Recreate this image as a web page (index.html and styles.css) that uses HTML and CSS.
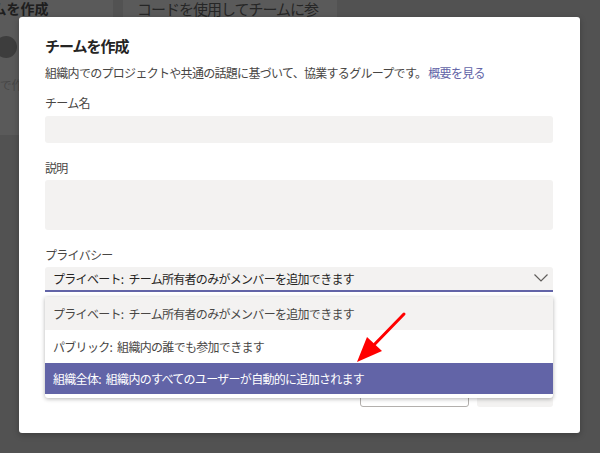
FILE: index.html
```html
<!DOCTYPE html>
<html lang="ja">
<head>
<meta charset="utf-8">
<title>チームを作成</title>
<link rel="stylesheet" href="styles.css">
</head>
<body>
<div class="bg-cards">
  <div class="card card-a">
    <div class="card-title">チームを作成</div>
    <div class="avatar"></div>
    <div class="card-text">チームで作成</div>
  </div>
  <div class="card card-b">
    <div class="card-title-b">コードを使用してチームに参</div>
  </div>
</div>

<div class="overlay">
  <div class="dialog">
    <h1 class="title">チームを作成</h1>
    <p class="desc">組織内でのプロジェクトや共通の話題に基づいて、協業するグループです。 <a class="link">概要を見る</a></p>

    <div class="label label-first">チーム名</div>
    <div class="input"></div>

    <div class="label">説明</div>
    <div class="textarea"></div>

    <div class="label">プライバシー</div>
    <div class="select-wrap">
      <div class="select">
        <span>プライベート: チーム所有者のみがメンバーを追加できます</span>
        <svg class="chevron" width="14" height="8" viewBox="0 0 14 8"><polyline points="0.5,0.5 7,7 13.5,0.5" fill="none" stroke="#605e5c" stroke-width="1.2"/></svg>
      </div>
      <div class="menu">
        <div class="item item-hover">プライベート: チーム所有者のみがメンバーを追加できます</div>
        <div class="item">パブリック: 組織内の誰でも参加できます</div>
        <div class="item item-selected">組織全体: 組織内のすべてのユーザーが自動的に追加されます</div>
      </div>
    </div>

    <div class="actions">
      <div class="btn btn-cancel">キャンセル</div>
      <div class="btn btn-create">作成</div>
    </div>
  </div>
</div>

<svg class="arrow" width="600" height="453" viewBox="0 0 600 453">
  <line x1="404" y1="314" x2="371" y2="348" stroke="#ff0000" stroke-width="3" stroke-linecap="round"/>
  <polygon points="357,362 367,337 382,351" fill="#ff0000"/>
</svg>
</body>
</html>
```

FILE: styles.css
```css
* {
  box-sizing: border-box;
  margin: 0;
  padding: 0;
}

html, body {
  width: 600px;
  height: 453px;
  overflow: hidden;
}

body {
  position: relative;
  background: #525252;
  font-family: "Noto Sans CJK JP", "Noto Sans", sans-serif;
  color: #484644;
}

/* dimmed page behind the dialog */
.bg-cards {
  display: flex;
  gap: 10px;
  margin-left: -100px;
}

.card {
  height: 135px;
  background: #5a5a5a;
  overflow: hidden;
}

.card-a {
  width: 213px;
  padding-left: 65px;
}

.card-b {
  width: 214px;
  padding-left: 14px;
}

.card-title {
  font-size: 14px;
  font-weight: 700;
  line-height: 17px;
  color: #1e1e1e;
  white-space: nowrap;
}

.card-title-b {
  font-size: 15px;
  line-height: 18px;
  letter-spacing: -1px;
  color: #262626;
  white-space: nowrap;
}

.avatar {
  width: 22px;
  height: 22px;
  margin-top: 19px;
  margin-left: 30px;
  border-radius: 50%;
  background: #3d3d3d;
}

.card-text {
  margin-top: 18px;
  font-size: 12px;
  line-height: 18px;
  letter-spacing: -0.3px;
  color: #474747;
  white-space: nowrap;
}

/* dialog */
.overlay {
  position: absolute;
  inset: 0;
  display: flex;
  align-items: flex-start;
  padding: 17px 0 0 19px;
}

.dialog {
  width: 561px;
  height: 416px;
  background: #ffffff;
  border-radius: 3px;
  padding: 18px 27px 26px 26px;
  box-shadow: 0 2px 6px rgba(0, 0, 0, 0.25);
  display: flex;
  flex-direction: column;
}

.title {
  font-size: 15px;
  font-weight: 700;
  line-height: 22px;
  letter-spacing: -1px;
  color: #252423;
}

.desc {
  margin-top: 7px;
  font-size: 12px;
  line-height: 18px;
  letter-spacing: -0.7px;
  color: #484644;
  white-space: nowrap;
}

.link {
  color: #6264a7;
}

.label {
  margin-top: 16px;
  font-size: 12px;
  line-height: 18px;
  letter-spacing: -0.7px;
  color: #484644;
}

.label-first {
  margin-top: 12px;
}

.input {
  margin-top: 4px;
  height: 27px;
  background: #f3f2f1;
  border-radius: 3px;
}

.textarea {
  margin-top: 3px;
  height: 51px;
  background: #f3f2f1;
  border-radius: 3px;
}

.select-wrap {
  position: relative;
  margin-top: 3px;
}

.select {
  height: 25px;
  background: #f3f2f1;
  border-radius: 3px 3px 0 0;
  border-bottom: 2px solid #6264a7;
  display: flex;
  align-items: center;
  justify-content: space-between;
  padding: 0 5px 0 8px;
  font-size: 12px;
  letter-spacing: -0.7px;
  word-spacing: 3px;
  color: #252423;
}

.chevron {
  display: block;
  margin-bottom: 1px;
}

.menu {
  position: absolute;
  top: 30px;
  left: 0;
  right: 0;
  z-index: 2;
  background: #ffffff;
  padding-bottom: 4px;
  box-shadow: 0 1px 4px rgba(0, 0, 0, 0.3);
  border-radius: 0 0 3px 3px;
}

.item {
  height: 33px;
  display: flex;
  align-items: center;
  padding-left: 8px;
  font-size: 12px;
  letter-spacing: -0.7px;
  word-spacing: 3px;
  color: #484644;
}

.item-hover {
  background: #f3f2f1;
}

.item-selected {
  height: 31px;
  background: #6264a7;
  color: #ffffff;
}

.actions {
  margin-top: 83px;
  display: flex;
  justify-content: flex-end;
  gap: 8px;
}

.btn {
  height: 32px;
  border-radius: 3px;
  display: flex;
  align-items: center;
  justify-content: center;
  font-size: 12px;
}

.btn-cancel {
  width: 109px;
  border: 1px solid #b3b0ad;
  background: #ffffff;
  color: #252423;
}

.btn-create {
  width: 76px;
  background: #f3f2f1;
  color: #bdbdbd;
}

.arrow {
  position: absolute;
  top: 0;
  left: 0;
  z-index: 5;
  pointer-events: none;
}
```
